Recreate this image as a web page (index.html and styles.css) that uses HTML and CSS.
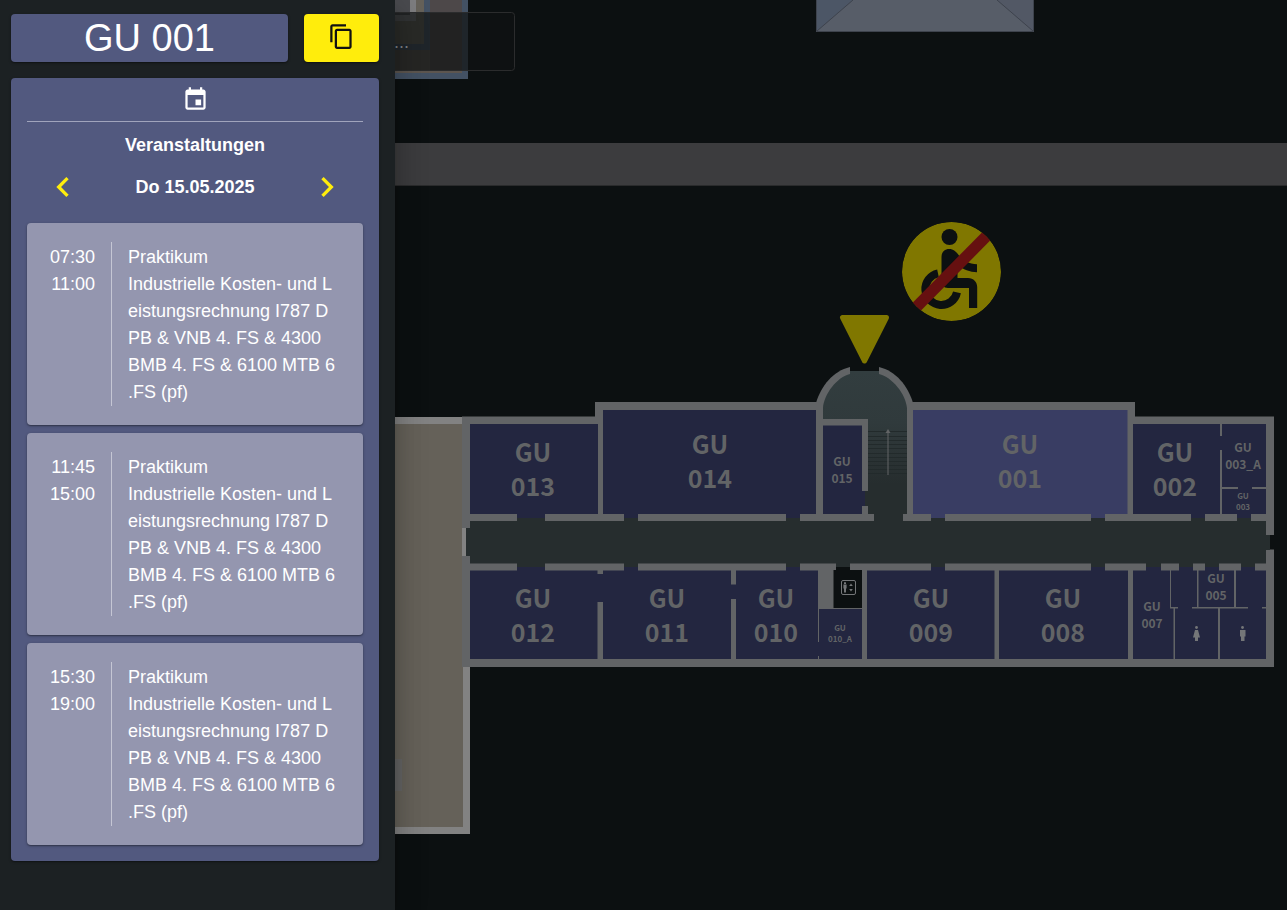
FILE: index.html
```html
<!DOCTYPE html>
<html lang="de">
<head>
<meta charset="utf-8">
<meta name="viewport" content="width=device-width, initial-scale=1">
<title>GU 001</title>
<link rel="stylesheet" href="styles.css">
</head>
<body>
<div class="app">
  <aside class="drawer">
    <header class="drawer-head">
      <h1 class="room-title">GU 001</h1>
      <button class="copy-button" type="button" aria-label="Link kopieren">
        <svg class="icon" viewBox="0 0 24 24" aria-hidden="true"><path d="M16 1H4c-1.1 0-2 .9-2 2v14h2V3h12V1zm3 4H8c-1.1 0-2 .9-2 2v14c0 1.1.9 2 2 2h11c1.1 0 2-.9 2-2V7c0-1.1-.9-2-2-2zm0 16H8V7h11v14z"/></svg>
      </button>
    </header>
    <section class="panel">
      <div class="panel-icon">
        <svg class="icon" viewBox="0 0 24 24" aria-hidden="true"><path d="M17 12h-5v5h5v-5zM16 1v2H8V1H6v2H5c-1.11 0-1.99.9-1.99 2L3 19c0 1.1.89 2 2 2h14c1.1 0 2-.9 2-2V5c0-1.1-.9-2-2-2h-1V1h-2zm3 18H5V8h14v11z"/></svg>
      </div>
      <h2 class="panel-title">Veranstaltungen</h2>
      <nav class="day-nav">
        <button class="day-button" type="button" aria-label="Vorheriger Tag">
          <svg class="chevron" viewBox="0 0 24 24" aria-hidden="true"><path d="M15.41 7.41L14 6l-6 6 6 6 1.41-1.41L10.83 12z"/></svg>
        </button>
        <span class="day">Do 15.05.2025</span>
        <button class="day-button" type="button" aria-label="Nächster Tag">
          <svg class="chevron" viewBox="0 0 24 24" aria-hidden="true"><path d="M10 6L8.59 7.41 13.17 12l-4.58 4.59L10 18l6-6z"/></svg>
        </button>
      </nav>
      <ul class="events">
        <li class="event">
          <div class="event-time"><time>07:30</time><time>11:00</time></div>
          <div class="event-text"><div>Praktikum</div><div>Industrielle Kosten- und Leistungsrechnung I787 DPB &amp; VNB 4. FS &amp; 4300 BMB 4. FS &amp; 6100 MTB 6.FS (pf)</div></div>
        </li>
        <li class="event">
          <div class="event-time"><time>11:45</time><time>15:00</time></div>
          <div class="event-text"><div>Praktikum</div><div>Industrielle Kosten- und Leistungsrechnung I787 DPB &amp; VNB 4. FS &amp; 4300 BMB 4. FS &amp; 6100 MTB 6.FS (pf)</div></div>
        </li>
        <li class="event">
          <div class="event-time"><time>15:30</time><time>19:00</time></div>
          <div class="event-text"><div>Praktikum</div><div>Industrielle Kosten- und Leistungsrechnung I787 DPB &amp; VNB 4. FS &amp; 4300 BMB 4. FS &amp; 6100 MTB 6.FS (pf)</div></div>
        </li>
      </ul>
    </section>
  </aside>

  <main class="map">
    <svg class="plan" viewBox="395 0 892 910" preserveAspectRatio="xMinYMin slice" role="img" aria-label="Gebäudeplan GU">
      <defs>
        <linearGradient id="stair" x1="0" y1="371" x2="0" y2="521" gradientUnits="userSpaceOnUse">
          <stop offset="0" stop-color="#323d3f"/><stop offset=".35" stop-color="#303a3c"/><stop offset=".75" stop-color="#262d2e"/><stop offset="1" stop-color="#262d2e"/>
        </linearGradient>
        <clipPath id="sign"><circle cx="951.5" cy="271.5" r="49.5"/></clipPath>
      </defs>

      <!-- neighbouring building, top left -->
      <path fill="#435163" d="M395 0h73v79h-73z"/>
      <path fill="#5c554f" d="M395 0h67v73h-67z"/>
      <path fill="#4d4849" d="M430 0h32v71h-32z"/>
      <path fill="#435163" d="M395 0h35v50h-35z"/>
      <path fill="#656159" d="M395 0h29v44h-29z"/>
      <path fill="#7d7d7f" d="M395 0h21v21h-21z"/>
      <path fill="#4a4b4f" d="M395 0h15v15h-15z"/>
      <rect class="tip" x="340" y="12.5" width="174.500" height="58" rx="3"/>
      <text class="tip-text" x="394" y="48">...</text>

      <!-- roof and road -->
      <path fill="#575d68" d="M816 0h218v32h-218z"/>
      <path fill="#4c5666" d="M817 0h36l-36 31z"/>
      <path fill="#525865" d="M1033 0h-36l36 31z"/>
      <path class="roof-edge" d="M816.500 0v31.500h217V0M817 31l36-31M1033 31l-36-31"/>
      <path fill="#3c3c3e" d="M395 143h2000v42H395z"/>
      <path fill="#2a2b2c" d="M395 185h2000v1H395z"/>

      <!-- west wing -->
      <path fill="#656159" d="M395 424h68v403h-68z"/>
      <path fill="#828282" d="M395 417h68v7h-68zM463 667h7v167h-75v-7h68zM462 528h4v28h-4z"/>
      <path fill="#646464" d="M395 759h7v32h-7z"/>

      <!-- walls -->
      <path class="wall" d="M462 416.500h133V402h540v14.500h139V667H462v-111h8v-28h-8z"/>
      <path fill="#828282" d="M462 528h4v28h-4z"/>
      <path fill="#0c1011" d="M1266 535h8v14.500h-8z"/>

      <!-- corridor and stairwell -->
      <path class="floor" d="M470 521h796v14h4v15h-4v13.500H470V556h-4v-28h4z"/>
      <path fill="#0c1011" d="M817 401h95v3h-95z"/>
      <path class="wall" d="M816 410v-7c5-17 17-32 34-36h29c17 4 29 19 34 36v7z"/>
      <path fill="#0c1011" d="M850 366h29v6h-29z"/>
      <path fill="url(#stair)" d="M823 419v-11c1-14 14-31 27-34v-3h29v3c13 3 27 20 28 34v106h-4v8h-29v-8h-6v-95z"/>
      <path class="step" d="M868 431.500h39M868 436.500h39M868 440.500h39M868 444.500h39M868 448.500h39M868 453.500h39M868 457.500h39M868 461.500h39M868 465.500h39M868 469.500h39M868 473.500h39"/>
      <path fill="#626466" d="M887.500 475v-42h-2l2.500-4 2.500 4h-2v42z"/>

      <!-- rooms, upper row -->
      <path class="room" d="M470 424h128v90h-53v4h-28v-4h-47z"/>
      <path class="room" d="M603 410h213v104h-16v4h-14v-4H638v4h-14v-4h-21z"/>
      <path class="room" d="M823 425.500h39V491h3v15h-3v8h-39z"/>
      <path class="floor" d="M865 491h3v15h-3zM517 518h28v4h-28zM624 518h14v4h-14zM786 518h14v4h-14zM931 518h14v4h-14zM1091 518h14v4h-14zM1191 518h14v4h-14zM1237 518h14v4h-14z"/>
      <path class="room selected" d="M913 410h214.500v104H1105v4h-14v-4H945v4h-14v-4h-18z"/>
      <path class="room" d="M1133 424h133v90h-15v4h-14v-4h-32v4h-14v-4h-58z"/>
      <path class="wall" d="M1220 424h2v12h-2zM1220 450h2v64h-2zM1222 487h16v2h-16zM1252 487h14v2h-14z"/>

      <!-- rooms, lower row -->
      <path class="floor" d="M517 563h28v5h-28zM624 563h14v5h-14zM786 563h14v5h-14zM836 563h14v5h-14zM931 563h14v5h-14zM1091 563h14v5h-14zM1146 563h15v5h-15zM1179 563h14v5h-14zM1205 563h14v5h-14zM1241 563h14v5h-14z"/>
      <path class="room" d="M470 570.500h47V567h28v3.500h79V567h14v3.500h148V567h14v3.500h18V659H470z"/>
      <path class="wall" d="M597.500 570h5.500v4h-5.500zM597.500 602h5.500v57h-5.500zM731 570h5v14.500h-5zM731 599h5v60h-5z"/>
      <path class="room" d="M819 609h43v50h-43zM817 642h3v14h-3z"/>
      <path fill="#0c1011" d="M833.500 570h2.500v-3h14v3h12v38h-28.500z"/>
      <path class="room" d="M867 570.500h64V567h14v3.500h49.500V659H867zM999 570.500h92V567h14v3.500h23V659H999z"/>
      <path class="room" d="M1133 570.500h13V567h15v3.500h18V567h14v3.500h12V567h14v3.500h22V567h14v3.500h11V659h-133z"/>
      <path class="wall" d="M1170 570h1v37h7v1.500h-3V659h-1.500v-50.500h-3.500zM1197 570h1.500v37h35.500v-37h2v37h12v1.500h-28V659h-2v-50.500h-26V607h5zM1262 607h4v1.500h-4z"/>

      <!-- lift, toilets -->
      <rect class="lift" x="841.500" y="580.500" width="14" height="14" rx="1.500"/>
      <path class="mark" d="M844 582.200h2v1.800h-2zM843.400 584.400h3.200v4h-.6v4h-2v-4h-.6zM851 583.500l1.800 2.500h-3.600zM851 591.500l1.800-2.500h-3.600z"/>
      <circle class="mark" cx="1196.500" cy="627.500" r="1.400"/>
      <path class="mark" d="M1195 630h3l2 7.500h-2v3.500h-3v-3.500h-2z"/>
      <circle class="mark" cx="1242.500" cy="627.500" r="1.400"/>
      <path class="mark" d="M1240 630h5.500v6.500h-1v4.500h-3.500v-4.500h-1z"/>

      <!-- entrance marker -->
      <path class="marker" d="M842.500 317.500h44L864.500 361z"/>
      <g clip-path="url(#sign)">
        <circle cx="951.5" cy="271.5" r="49.5" fill="#807700"/>
        <circle cx="949.5" cy="237" r="8" fill="#0c1011"/>
        <path fill="#0c1011" d="M941.500 257c0-5 3.500-8 7.500-8 4.500 0 7 2.500 10 6.500 4.500 5.500 10 8.500 18 8.800v8c-7-.2-14-3-19.500-7.300V278H968c5.500 0 9.200 4 9.200 9v21H969v-20h-21c-4.500 0-6.500-3-6.500-7z"/>
        <path class="wheel" d="M938 273.300a16 16 0 1 0 19 19"/>
        <path stroke="#661010" stroke-width="11.500" d="M911 312.500l82-83"/>
      </g>

      <g class="label">
        <text x="533" y="462">GU</text><text x="533" y="496">013</text>
        <text x="710" y="454">GU</text><text x="710" y="488">014</text>
        <text x="1020" y="454">GU</text><text x="1020" y="488">001</text>
        <text x="1175" y="462">GU</text><text x="1175" y="496">002</text>
        <text x="533" y="608">GU</text><text x="533" y="642">012</text>
        <text x="667" y="608">GU</text><text x="667" y="642">011</text>
        <text x="776" y="608">GU</text><text x="776" y="642">010</text>
        <text x="931" y="608">GU</text><text x="931" y="642">009</text>
        <text x="1063" y="608">GU</text><text x="1063" y="642">008</text>
      </g>
      <g class="label small">
        <text x="842" y="466">GU</text><text x="842" y="483">015</text>
        <text x="1243" y="452">GU</text><text x="1243" y="469">003_A</text>
        <text x="1152" y="611">GU</text><text x="1152" y="628">007</text>
        <text x="1216" y="583">GU</text><text x="1216" y="600">005</text>
      </g>
      <g class="label tiny">
        <text x="1243" y="499">GU</text><text x="1243" y="510">003</text>
        <text x="840" y="631">GU</text><text x="840" y="642">010_A</text>
      </g>
    </svg>
  </main>
</div>
</body>
</html>
```
FILE: styles.css
```css
* {
  box-sizing: border-box;
}

body {
  margin: 0;
  background: #0c1011;
  color: #fff;
  font: 18px/27px "Liberation Sans", Arial, sans-serif;
}

.app {
  display: flex;
  min-height: 100vh;
}

.drawer {
  position: relative;
  z-index: 1;
  flex: 0 0 395px;
  padding: 14px 16px 16px 11px;
  background: #1c2123;
  box-shadow: 0 8px 10px -5px rgba(0, 0, 0, .2), 0 16px 24px 2px rgba(0, 0, 0, .14), 0 6px 30px 5px rgba(0, 0, 0, .12);
}

.drawer-head {
  display: flex;
  gap: 16px;
  margin-bottom: 16px;
}

.room-title,
.copy-button,
.panel,
.event {
  border-radius: 4px;
  box-shadow: 0 1px 3px rgba(0, 0, 0, .3), 0 1px 1px rgba(0, 0, 0, .2);
}

.room-title {
  flex: 1;
  margin: 0;
  background: #52597f;
  font-size: 38px;
  font-weight: 400;
  line-height: 48px;
  text-align: center;
}

.copy-button {
  display: flex;
  align-items: center;
  justify-content: center;
  width: 75px;
  padding: 0 0 4px;
  border: 0;
  background: #ffed0c;
  color: #111;
  cursor: pointer;
}

.icon {
  display: block;
  width: 27px;
  height: 27px;
  fill: currentColor;
}

.panel {
  padding: 8px 16px 16px;
  background: #52597f;
}

.panel-icon {
  display: flex;
  justify-content: center;
  padding-bottom: 8px;
  border-bottom: 1px solid #a0a4bc;
}

.panel-title {
  margin: 10px 0 8px;
  font-size: 18px;
  font-weight: 700;
  text-align: center;
}

.day-nav {
  display: flex;
  align-items: center;
  justify-content: space-between;
  padding: 0 16px;
  font-weight: 700;
}

.day-button {
  padding: 0;
  border: 0;
  background: none;
  color: #ffed0c;
  cursor: pointer;
}

.chevron {
  display: block;
  width: 40px;
  height: 40px;
  fill: currentColor;
}

.events {
  display: grid;
  gap: 8px;
  margin: 16px 0 0;
  padding: 0;
  list-style: none;
}

.event {
  display: flex;
  padding: 19px 26px 19px 22px;
  background: #9496af;
}

.event-time {
  display: flex;
  flex: none;
  flex-direction: column;
  width: 62px;
  padding: 2px 16px 0 0;
  text-align: right;
}

.event-text {
  flex: 1;
  padding: 2px 0 0 16px;
  border-left: 1px solid #c5c6d4;
  line-break: anywhere;
}

.map {
  position: relative;
  flex: 1;
  min-width: 0;
  overflow: hidden;
}

.plan {
  position: absolute;
  inset: 0;
  width: 100%;
  height: 100%;
}

.wall {
  fill: #626466;
}

.floor {
  fill: #262d2e;
}

.room {
  fill: #232640;
}

.selected {
  fill: #393d63;
}

.step {
  stroke: #222a2b;
}

.roof-edge {
  fill: none;
  stroke: #3e434d;
}

.lift {
  fill: none;
  stroke: #747678;
}

.mark {
  fill: #747678;
}

.marker {
  fill: #807700;
  stroke: #807700;
  stroke-width: 5px;
  stroke-linejoin: round;
}

.wheel {
  fill: none;
  stroke: #0c1011;
  stroke-width: 8px;
}

.tip {
  fill: rgba(16, 18, 18, .7);
  stroke: #2b2c2d;
}

.tip-text {
  fill: #7c8284;
  font-size: 18px;
}

.label {
  fill: #626466;
  font: 700 25px "Noto Sans CJK SC", "Noto Sans", sans-serif;
  text-anchor: middle;
}

.small {
  font-size: 12px;
}

.tiny {
  font-size: 8px;
}
```
